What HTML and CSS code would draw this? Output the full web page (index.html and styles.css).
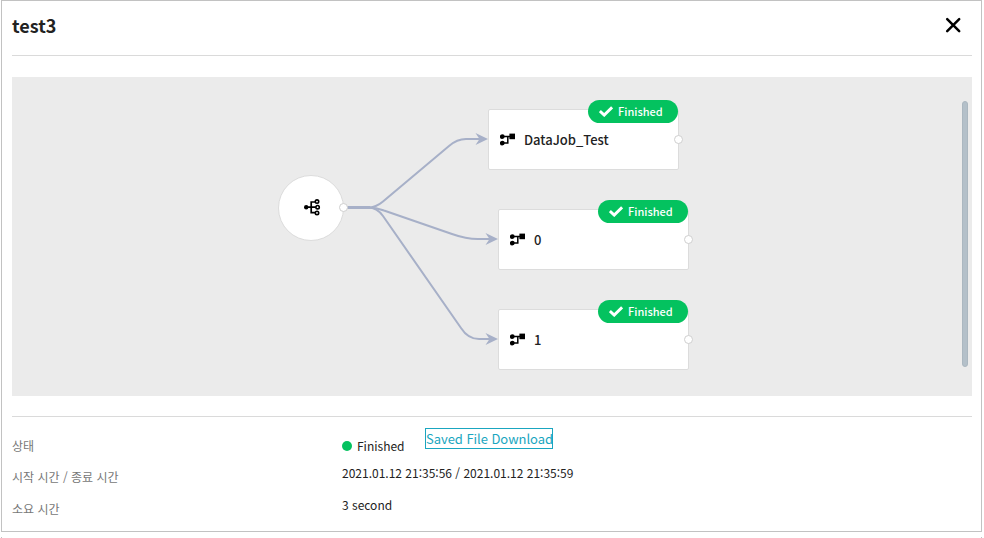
FILE: index.html
```html
<!DOCTYPE html>
<html lang="ko">
<head>
<meta charset="utf-8">
<title>test3</title>
<link rel="stylesheet" href="styles.css">
</head>
<body>
<svg class="defs" width="0" height="0" aria-hidden="true">
  <symbol id="job" viewBox="0 0 16 13">
    <path d="M3 3.5H10M7.8 3.5V10H3" fill="none" stroke="#000" stroke-width="1.5"/>
    <circle cx="2.3" cy="3.6" r="2.4"/><circle cx="2.3" cy="10.1" r="2.4"/>
    <rect x="9.4" y="0.6" width="5.6" height="5.6"/>
  </symbol>
  <symbol id="check" viewBox="0 0 14 11">
    <path d="M0.9 5.1L5.2 9.1L13.1 1.3" fill="none" stroke="#fff" stroke-width="2.9"/>
  </symbol>
</svg>
<main class="dialog">
  <header class="head">
    <h1>test3</h1>
    <button class="close" aria-label="Close">
      <svg width="16" height="16" viewBox="0 0 16 16"><path d="M2.2 2.2L14.2 14.2M14.2 2.2L2.2 14.2" stroke="#000" stroke-width="2.5" stroke-linecap="round"/></svg>
    </button>
  </header>
  <section class="canvas">
    <svg class="edges" width="960" height="319" viewBox="12 77 960 319">
      <g fill="none" stroke="#a7b0c8" stroke-width="2">
        <path d="M345 207.5H368Q376 207.5 383 201.5L449 146Q457 139 466 139H480"/>
        <path d="M345 207.5H368Q376 207.5 384 210.5L452 234Q466 239 478 239H490"/>
        <path d="M345 207.5H368Q377 207.5 383 216L461 328Q468 339 479 339H490"/>
        <path d="M345 207.5H370" stroke-width="3"/>
      </g>
      <g fill="#a7b0c8">
        <path d="M488 139L475.5 133L479.5 139L475.5 145Z"/>
        <path d="M498 239L485.5 233L489.5 239L485.5 245Z"/>
        <path d="M498 339L485.5 333L489.5 339L485.5 345Z"/>
      </g>
    </svg>
    <div class="start">
      <svg width="17" height="17" viewBox="0 0 17 17">
        <path d="M2 8.2H12M11.5 3H7.2V13.7H11.5" fill="none" stroke="#000" stroke-width="1.7"/>
        <circle cx="2.2" cy="8.2" r="2.2"/>
        <g fill="#fff" stroke="#000" stroke-width="1.6"><circle cx="13" cy="2.6" r="1.7"/><circle cx="13.6" cy="8.2" r="1.7"/><circle cx="13" cy="13.9" r="1.7"/></g>
      </svg>
      <i class="port"></i>
    </div>
    <div class="node first">
      <svg class="job" width="16" height="13"><use href="#job"/></svg><span>DataJob_Test</span>
      <b class="badge"><svg width="14" height="11"><use href="#check"/></svg>Finished</b><i class="port"></i>
    </div>
    <div class="node second">
      <svg class="job" width="16" height="13"><use href="#job"/></svg><span>0</span>
      <b class="badge"><svg width="14" height="11"><use href="#check"/></svg>Finished</b><i class="port"></i>
    </div>
    <div class="node third">
      <svg class="job" width="16" height="13"><use href="#job"/></svg><span>1</span>
      <b class="badge"><svg width="14" height="11"><use href="#check"/></svg>Finished</b><i class="port"></i>
    </div>
    <div class="scroll"></div>
  </section>
  <dl class="info">
    <dt>상태</dt>
    <dd class="status"><i class="dot"></i><span>Finished</span><a class="download">Saved File Download</a></dd>
    <dt>시작 시간 / 종료 시간</dt>
    <dd class="time">2021.01.12 21:35:56 / 2021.01.12 21:35:59</dd>
    <dt>소요 시간</dt>
    <dd>3 second</dd>
  </dl>
</main>
<div class="next"></div>
</body>
</html>
```
FILE: styles.css
```css
* { box-sizing: border-box; }
body {
  margin: 0;
  height: 538px;
  overflow: hidden;
  background: #fff;
  color: #222;
  font-family: "Noto Sans CJK KR", sans-serif;
}
.defs { position: absolute; }
.dialog {
  width: 981px;
  height: 532px;
  margin-left: 1px;
  padding: 0 9px 0 10px;
  border: 1px solid #c2c2c2;
}
.head {
  display: flex;
  align-items: flex-start;
  justify-content: space-between;
  height: 55px;
  border-bottom: 1px solid #dadada;
}
h1 { margin: 10px 0 0; font-size: 18px; line-height: 28px; font-weight: 700; }
.close { margin: 16px 11px 0 0; padding: 0; width: 16px; height: 16px; border: 0; background: none; }
.close svg, .job, .badge svg { display: block; flex: none; }
.canvas {
  position: relative;
  height: 319px;
  margin-top: 21px;
  background: #ebebeb;
}
.edges { position: absolute; inset: 0; }
.start {
  position: absolute;
  left: 266px;
  top: 98px;
  width: 66px;
  height: 66px;
  padding: 23px 0 0 25px;
  border: 1px solid #dcdcdc;
  border-radius: 50%;
  background: #fff;
}
.start svg { display: block; }
.port {
  position: absolute;
  right: -5px;
  top: 25px;
  width: 9px;
  height: 9px;
  border: 1px solid #cfcfcf;
  border-radius: 50%;
  background: #fff;
}
.start .port { top: 27px; }
.node {
  position: absolute;
  left: 486px;
  width: 191px;
  height: 61px;
  display: flex;
  align-items: center;
  padding-left: 11px;
  gap: 8px;
  border: 1px solid #dcdcdc;
  border-radius: 2px;
  background: #fff;
  font-size: 13px;
  font-weight: 500;
}
.first { left: 476px; top: 32px; }
.second { top: 132px; }
.third { top: 232px; }
.badge {
  position: absolute;
  right: 0;
  top: -10px;
  width: 90px;
  height: 23px;
  display: flex;
  align-items: center;
  gap: 5px;
  padding: 0 0 2px 11px;
  border-radius: 12px;
  background: #04c25f;
  color: #fff;
  font-size: 11px;
  font-weight: 500;
}
.badge svg { margin-top: 2px; }
.scroll {
  position: absolute;
  right: 4px;
  top: 24px;
  width: 6px;
  height: 266px;
  border: 1px solid #abb7c0;
  border-radius: 3px;
  background: #b4c0c9;
}
.info {
  display: grid;
  grid-template-columns: 330px 1fr;
  grid-template-rows: 31px 32px 32px;
  margin: 20px 0 0;
  padding-top: 13px;
  border-top: 1px solid #dadada;
  font-size: 12px;
  line-height: 32px;
}
dt { color: #777; }
dd { margin: -4px 0 0; }
.status { display: flex; align-items: center; height: 32px; margin-top: 0; }
.dot { width: 10px; height: 10px; margin-right: 5px; border-radius: 50%; background: #04c25f; }
.download {
  width: 128px;
  height: 21px;
  margin: -15px 0 0 20px;
  padding-left: 0.5px;
  border: 1px solid #1aa6c0;
  color: #1aa6c0;
  font-size: 13px;
  line-height: 19px;
  letter-spacing: -0.05px;
  white-space: nowrap;
}
.next {
  width: 981px;
  height: 1px;
  margin: 5px 0 0 1px;
  border: solid #c2c2c2;
  border-width: 0 1px;
}
```
